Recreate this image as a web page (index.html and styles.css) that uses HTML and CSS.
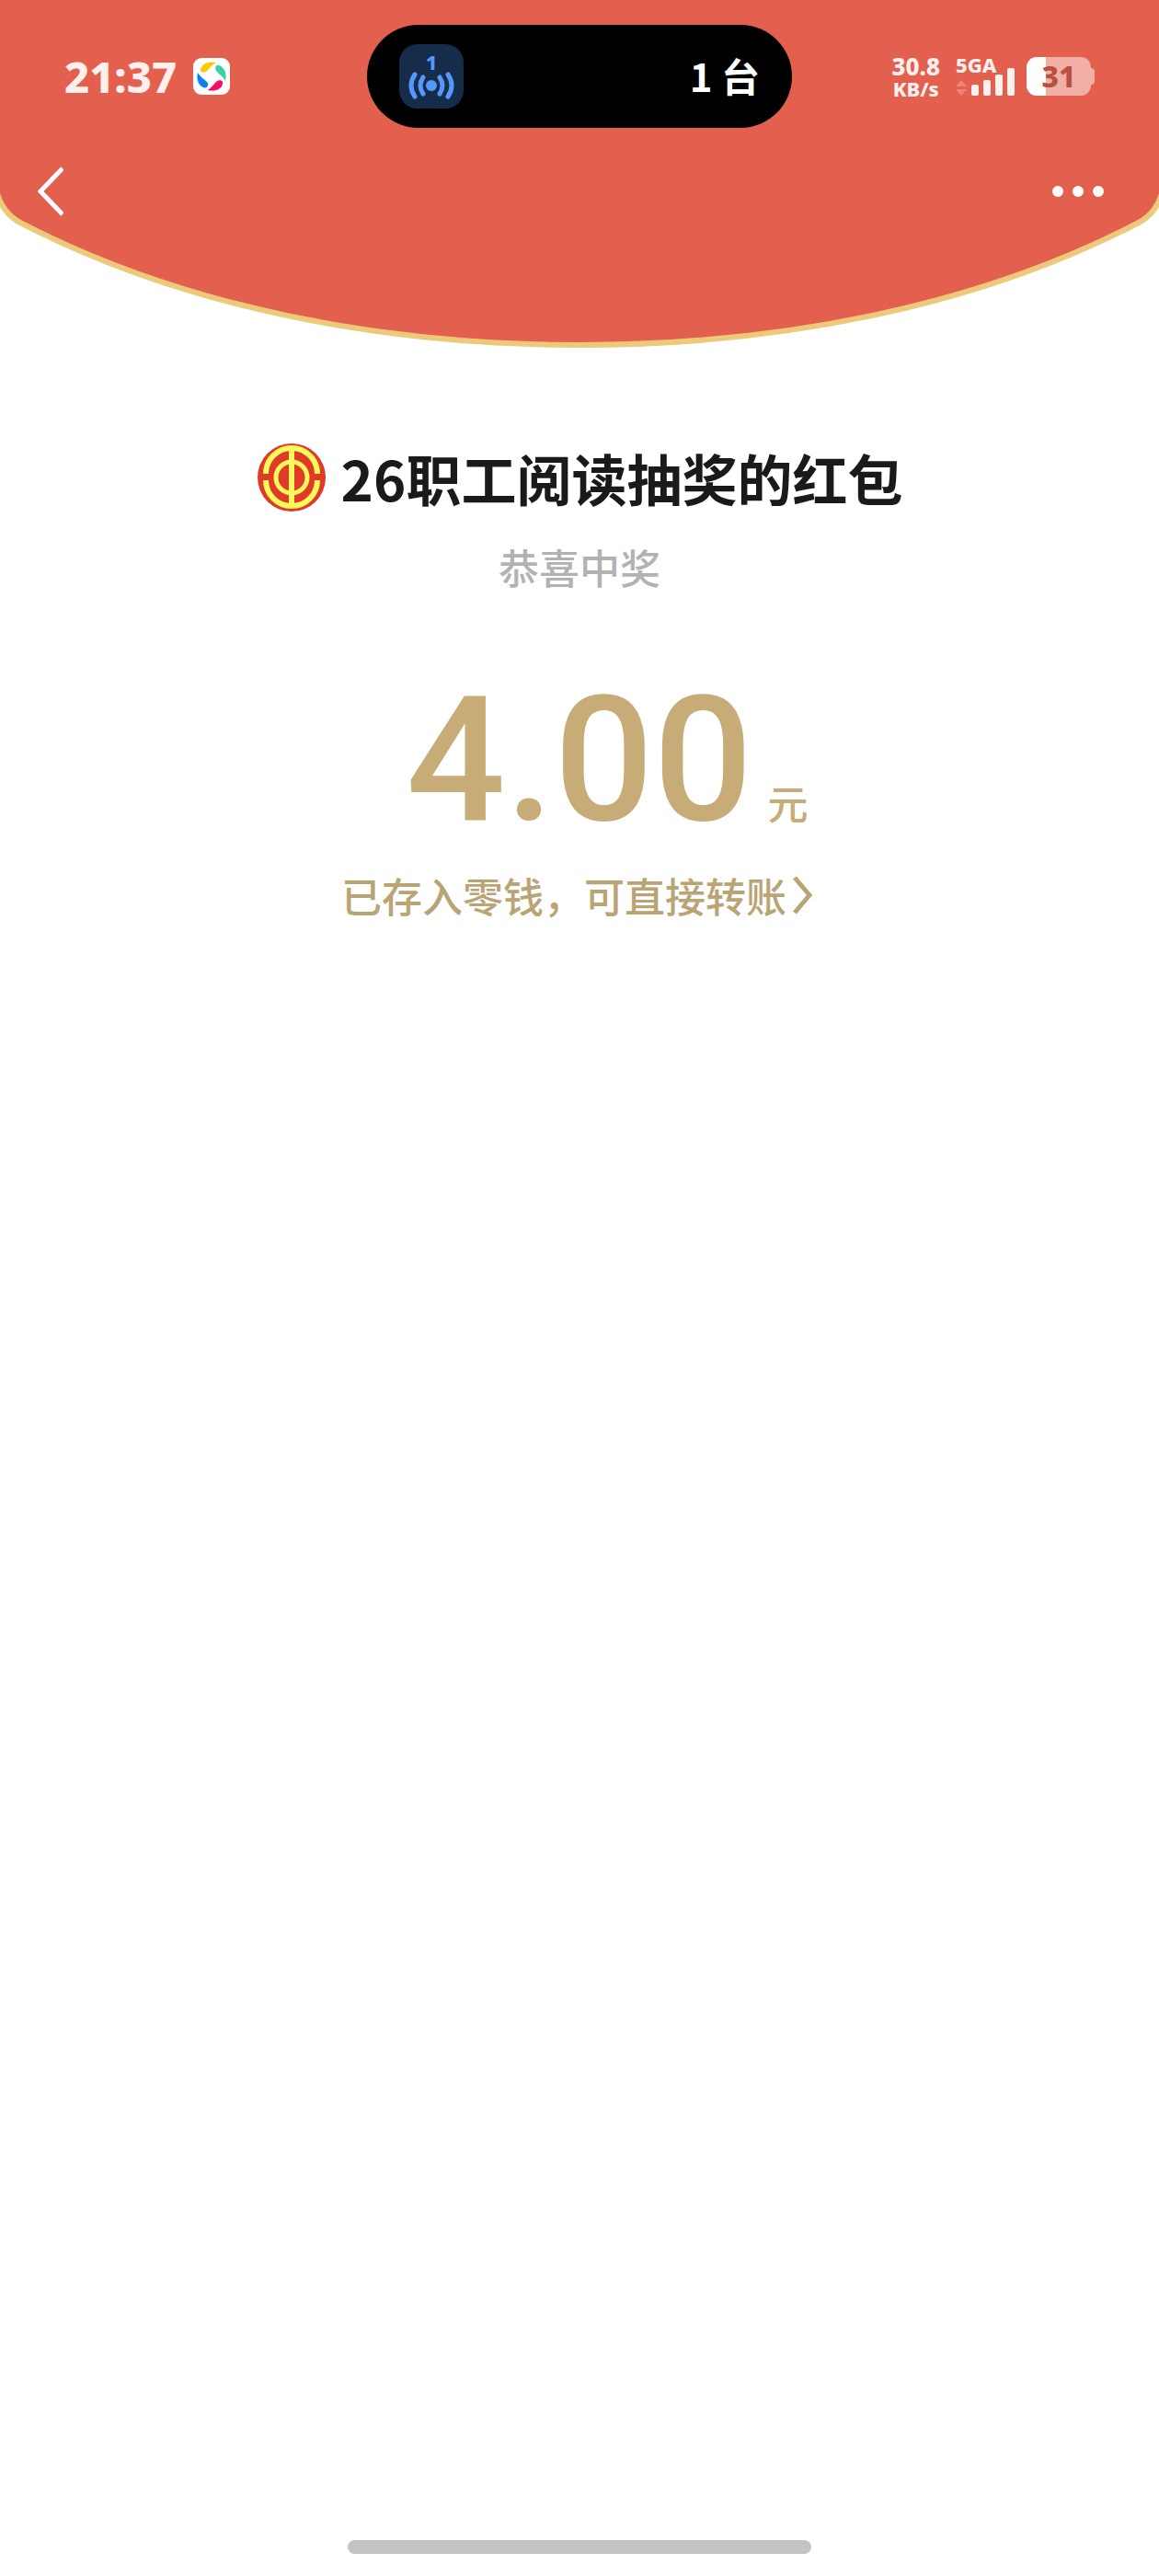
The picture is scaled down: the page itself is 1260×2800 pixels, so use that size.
FILE: index.html
```html
<!DOCTYPE html>
<html lang="zh-CN">
<head>
<meta charset="utf-8">
<meta name="viewport" content="width=device-width, initial-scale=1">
<title>红包详情</title>
<link rel="stylesheet" href="styles.css">
</head>
<body>
<div class="page">
  <header class="header">
    <svg class="header-shape" viewBox="0 0 1260 382" preserveAspectRatio="none" aria-hidden="true">
      <path class="shape-fill" d="M-4 -6V206C-1 222 9 236 24 243C200 334 415 375 630 375S1060 334 1236 243C1251 236 1261 222 1264 206V-6Z"/>
    </svg>
    <div class="header-content">
      <div class="status">
        <div class="status-left">
          <span class="time">21:37</span>
          <svg class="app-icon" viewBox="0 0 40 40" aria-hidden="true">
            <rect width="40" height="40" rx="9" fill="#fff"/>
            <path fill="#f9cb05" d="M25 5C17 3 10 6 8 12C7 16 12 17 15 14C18 11 20 8 25 5Z"/>
            <path fill="#35d3a0" d="M35 25C37 17 34 10 28 8C24 7 23 12 26 15C29 18 32 20 35 25Z"/>
            <path fill="#f40d62" d="M16 35C24 37 31 34 32 28C33 24 28 23 25 26C22 29 20 32 16 35Z"/>
            <path fill="#0a82f5" d="M5 16C3 23 6 30 11 32C15 34 18 29 15 26C11 22 8 21 5 16Z"/>
          </svg>
        </div>
        <div class="island">
          <div class="hotspot">
            <span class="hotspot-count">1</span>
            <svg class="hotspot-waves" viewBox="0 0 50 30" aria-hidden="true">
              <circle cx="25" cy="15" r="6"/>
              <path d="M16 6Q10 15 16 24M34 6Q40 15 34 24M7 3Q-1 15 7 27M43 3Q51 15 43 27"/>
            </svg>
          </div>
          <span class="devices">1 台</span>
        </div>
        <div class="status-right">
          <div class="speed"><span class="speed-value">30.8</span><span class="speed-unit">KB/s</span></div>
          <div class="signal">
            <span class="network">5GA</span>
            <svg class="bars" viewBox="0 0 64 30" aria-hidden="true">
              <path class="traffic" d="M0 20L6 13L12 20ZM0 23H12L6 30Z"/>
              <rect x="17" y="18" width="8" height="12" rx="2"/>
              <rect x="30" y="13" width="8" height="17" rx="2"/>
              <rect x="43" y="7" width="8" height="23" rx="2"/>
              <rect x="56" y="0" width="8" height="30" rx="2"/>
            </svg>
          </div>
          <div class="battery"><div class="battery-body">31</div><div class="battery-tip"></div></div>
        </div>
      </div>
      <nav class="nav">
        <button class="nav-button" type="button" aria-label="返回">
          <svg width="28" height="56" viewBox="0 0 28 56"><path d="M27 3L3 28L27 53" fill="none" stroke="#fff" stroke-width="5"/></svg>
        </button>
        <button class="nav-button" type="button" aria-label="更多">
          <svg width="56" height="56" viewBox="0 0 56 56" fill="#fff"><circle cx="6" cy="28" r="6"/><circle cx="28" cy="28" r="6"/><circle cx="50" cy="28" r="6"/></svg>
        </button>
      </nav>
    </div>
  </header>
  <main class="detail">
    <h1 class="sender">
      <svg class="avatar" viewBox="0 0 76 76" aria-hidden="true">
        <circle cx="38" cy="38" r="37" fill="#e03a28"/>
        <g fill="none" stroke="#fff85a">
          <path stroke-width="6" d="M10 34A28 28 0 0 1 66 34M10 41A28 28 0 0 0 66 41"/>
          <circle cx="38" cy="38" r="17" stroke-width="5"/>
          <path stroke-width="6" d="M38 9V67"/>
        </g>
      </svg>
      <span>26职工阅读抽奖的红包</span>
    </h1>
    <p class="wish">恭喜中奖</p>
    <p class="amount"><span class="amount-value">4.00</span><span class="amount-unit">元</span></p>
    <a class="balance" href="#">已存入零钱，可直接转账<svg class="balance-arrow" viewBox="0 0 22 44" aria-hidden="true"><path d="M3 3L19 22L3 41" fill="none" stroke="currentColor" stroke-width="5"/></svg></a>
  </main>
  <div class="home-indicator"></div>
</div>
</body>
</html>
```
FILE: styles.css
```css
* { box-sizing: border-box; }
body {
  margin: 0;
  background: #fff;
  font-family: "Noto Sans CJK SC", sans-serif;
}
.page {
  min-height: 100vh;
  display: flex;
  flex-direction: column;
  align-items: center;
}
.header { display: grid; width: 100%; }
.header-shape, .header-content { grid-area: 1 / 1; }
.header-shape { display: block; width: 100%; height: 382px; }
.shape-fill { fill: #e4604e; stroke: #edca7b; stroke-width: 6; }

.status {
  display: grid;
  grid-template-columns: 1fr 462px 1fr;
  align-items: center;
  padding: 27px 70px 0;
  color: #fff0ee;
  font-family: "Noto Sans", sans-serif;
  font-weight: 800;
}
.status-left { display: flex; align-items: center; gap: 18px; }
.time { font-size: 47px; line-height: 56px; }
.app-icon { width: 40px; height: 40px; }
.island {
  display: flex;
  align-items: center;
  justify-content: space-between;
  height: 112px;
  padding: 0 35px;
  border-radius: 56px;
  background: #000;
}
.hotspot {
  display: flex;
  flex-direction: column;
  align-items: center;
  width: 70px;
  height: 70px;
  padding-top: 8px;
  border-radius: 20px;
  background: #152d4b;
}
.hotspot-count { color: #5598fa; font-size: 22px; line-height: 22px; }
.hotspot-waves { width: 50px; height: 30px; fill: #5598fa; }
.hotspot-waves path { fill: none; stroke: #5598fa; stroke-width: 5; stroke-linecap: round; }
.devices { padding-bottom: 3px; color: #fff; font: 700 42px/56px "Noto Sans CJK SC", sans-serif; }
.status-right { display: flex; align-items: center; justify-content: flex-end; gap: 13px; }
.speed { display: flex; flex-direction: column; align-items: center; margin-right: 4px; }
.speed-value { font-size: 26px; line-height: 26px; }
.speed-unit { font-size: 22px; line-height: 22px; }
.signal { display: flex; flex-direction: column; height: 42px; }
.network { font-size: 22px; line-height: 16px; height: 12px; }
.bars { width: 64px; height: 30px; fill: #fff0ee; }
.bars .traffic { fill: #ec8577; }
.battery { display: flex; align-items: center; }
.battery-body {
  width: 70px;
  height: 42px;
  border-radius: 11px;
  background: linear-gradient(90deg, #fff 30%, #f2afa6 30%);
  color: #b9503f;
  font-size: 32px;
  line-height: 42px;
  text-align: center;
}
.battery-tip { width: 4px; height: 18px; border-radius: 0 4px 4px 0; background: #f2afa6; }

.nav { display: flex; justify-content: space-between; padding: 41px 60px 0 41px; }
.nav-button { display: flex; padding: 0; border: 0; background: none; }

.detail { display: flex; flex-direction: column; align-items: center; padding-top: 95px; }
.sender {
  display: flex;
  align-items: center;
  gap: 16px;
  margin: 0;
  color: #1a1a1a;
  font-size: 60px;
  font-weight: 700;
  line-height: 84px;
}
.avatar { width: 76px; height: 76px; }
.wish { margin: 23px 0 0; color: #b2b2b2; font-size: 44px; font-weight: 500; line-height: 64px; }
.amount { display: flex; align-items: baseline; gap: 16px; margin: 78px 0 0; padding-left: 60px; color: #c8ac78; }
.amount-value { font: 500 190px/200px Roboto, sans-serif; }
.amount-unit { font-size: 44px; font-weight: 500; line-height: 64px; }
.balance {
  display: flex;
  align-items: center;
  gap: 6px;
  margin-top: 15px;
  padding-right: 6px;
  color: #bba474;
  font-size: 44px;
  font-weight: 500;
  line-height: 64px;
  text-decoration: none;
}
.balance-arrow { width: 22px; height: 44px; }
.home-indicator {
  width: 40%;
  height: 15px;
  margin: auto 0 24px;
  border-radius: 8px;
  background: #c3c3c3;
}
```
